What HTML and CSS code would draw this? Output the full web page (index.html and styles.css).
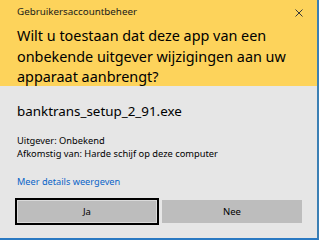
FILE: index.html
```html
<!DOCTYPE html>
<html lang="nl">
<head>
<meta charset="utf-8">
<link rel="stylesheet" href="styles.css">
</head>
<body>
<div class="window">
  <div class="header">
    <div class="caption">Gebruikersaccountbeheer</div>
    <svg class="close" width="8" height="8" viewBox="0 0 8 8"><path d="M0.5 0.5L7.5 7.5M7.5 0.5L0.5 7.5" stroke="#3a3a3a" stroke-width="1" fill="none"/></svg>
    <div class="question">Wilt u toestaan dat deze app van een onbekende uitgever wijzigingen aan uw apparaat aanbrengt?</div>
  </div>
  <div class="content">
    <div class="file">banktrans_setup_2_91.exe</div>
    <div class="info">Uitgever: Onbekend</div>
    <div class="info">Afkomstig van: Harde schijf op deze computer</div>
    <div class="link">Meer details weergeven</div>
    <div class="buttons">
      <div class="btn btn-yes">Ja</div>
      <div class="btn btn-no">Nee</div>
    </div>
  </div>
</div>
</body>
</html>
```
FILE: styles.css
```css
html, body {
  margin: 0;
  padding: 0;
  background: #ffffff;
}
body {
  font-family: "Noto Sans", "Open Sans", sans-serif;
  color: #000;
  width: 319px;
  height: 241px;
  overflow: hidden;
}
.window {
  width: 317px;
  height: 238px;
  border-right: 2px solid #3b7fb4;
  border-bottom: 2px solid #2a79c2;
  background: #e6e6e6;
  display: flex;
  flex-direction: column;
}
.header {
  position: relative;
  height: 86px;
  background: #fdd35b;
  padding: 6px 0 0 17px;
  box-sizing: border-box;
}
.caption {
  font-size: 9.8px;
  line-height: 12px;
  color: #1a1a1a;
}
.close {
  position: absolute;
  right: 14px;
  top: 9px;
}
.question {
  margin-top: 8px;
  font-size: 14.4px;
  line-height: 20.5px;
  width: 290px;
  color: #000;
}
.content {
  padding: 16px 0 0 17px;
  display: flex;
  flex-direction: column;
}
.file {
  font-size: 13.4px;
  line-height: 18px;
}
.info {
  font-size: 9.3px;
  line-height: 13px;
}
.file + .info {
  margin-top: 14px;
}
.link {
  margin-top: 16px;
  font-size: 9.2px;
  line-height: 12px;
  color: #0a64c8;
}
.buttons {
  display: flex;
  align-items: center;
  gap: 3px;
  margin: 10px 0 0 -2px;
}
.btn {
  background: #bdbdbd;
  font-size: 9.5px;
  display: flex;
  align-items: center;
  justify-content: center;
  box-sizing: border-box;
}
.btn-yes {
  width: 144px;
  height: 27px;
  border: 2px solid #000;
  box-shadow: inset 0 0 0 1px #dadada;
}
.btn-no {
  width: 140px;
  height: 23px;
}
```
